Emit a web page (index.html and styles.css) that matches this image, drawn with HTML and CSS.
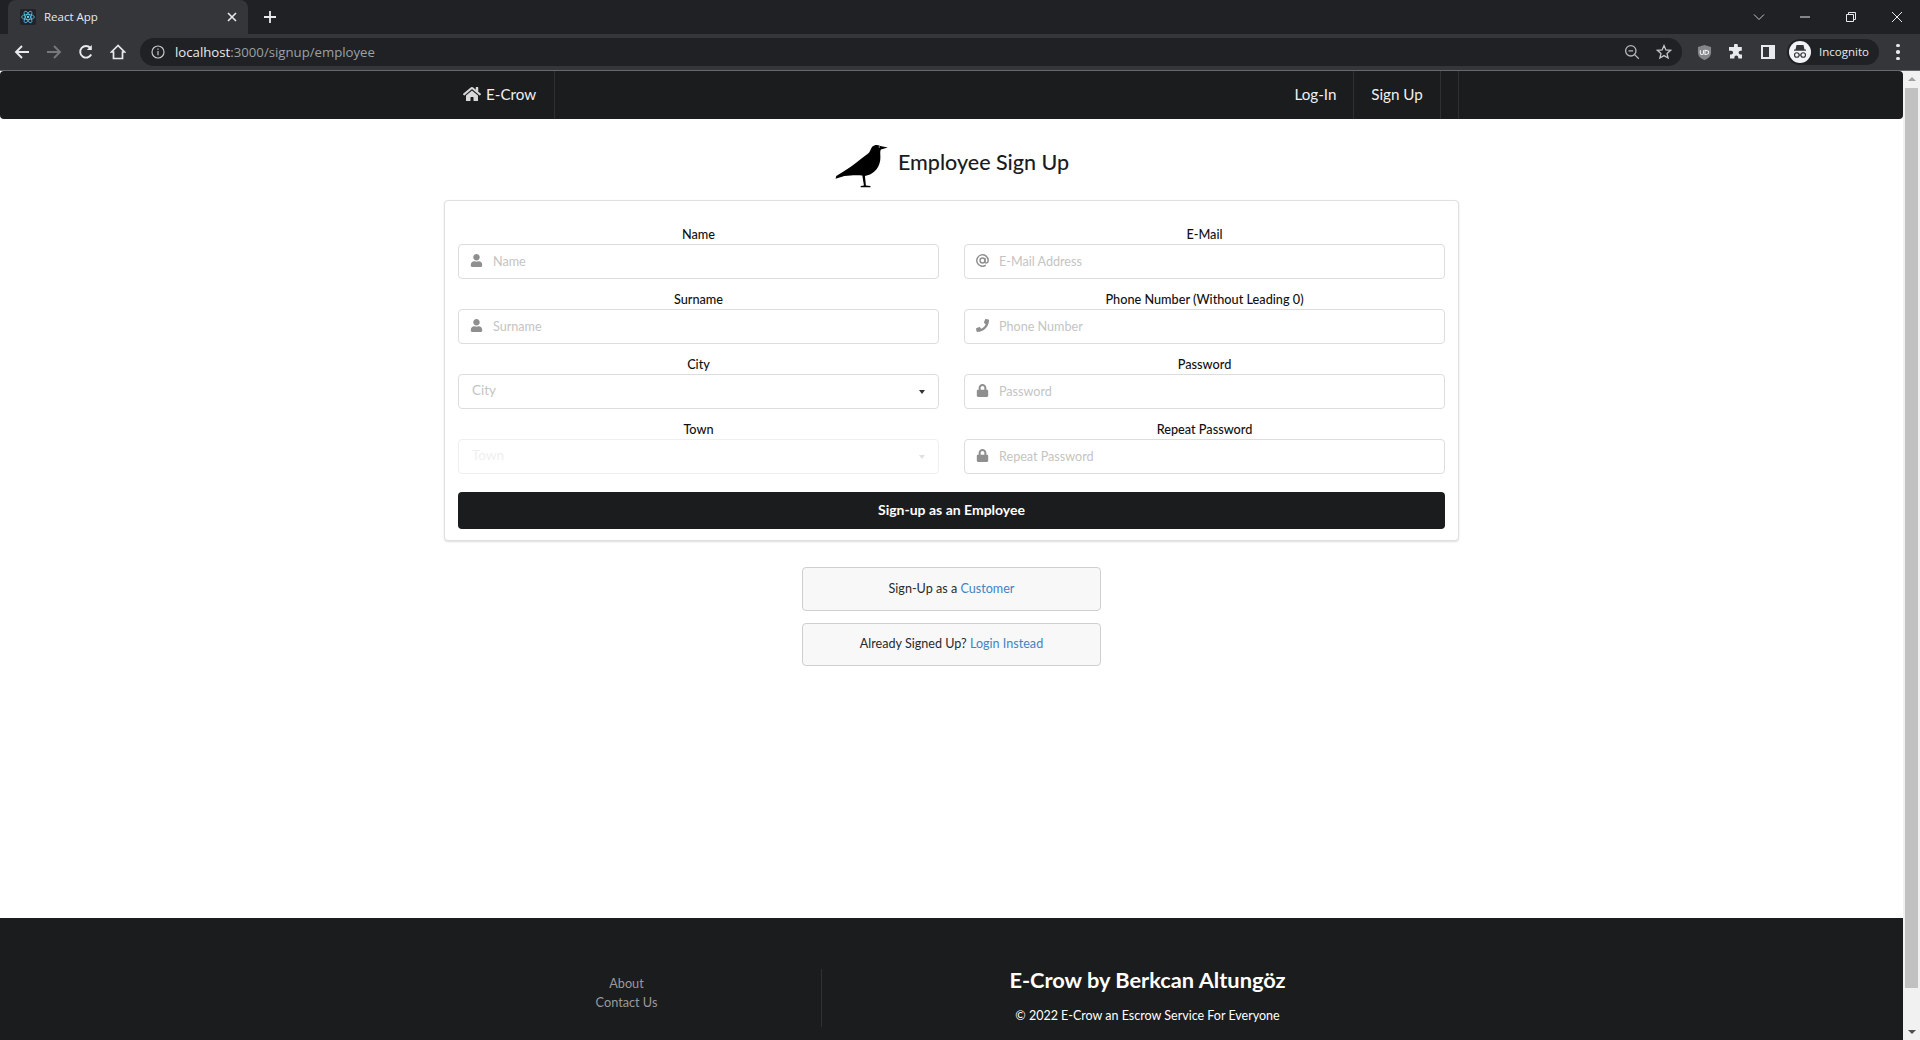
FILE: index.html
```html
<!DOCTYPE html>
<html lang="en">

<head>
    <meta charset="UTF-8">
    <title>React App</title>
    <link rel="stylesheet" href="styles.css">
</head>

<body>
    <!-- browser window chrome -->
    <div class="tab-strip">
        <div class="tab">
            <span class="favicon">
                <svg viewBox="0 0 24 24" width="14" height="14" fill="none" stroke="#61dafb" stroke-width="1.2">
                    <circle cx="12" cy="12" r="2" fill="#61dafb" stroke="none"/>
                    <ellipse cx="12" cy="12" rx="11" ry="4.3"/>
                    <ellipse cx="12" cy="12" rx="11" ry="4.3" transform="rotate(60 12 12)"/>
                    <ellipse cx="12" cy="12" rx="11" ry="4.3" transform="rotate(120 12 12)"/>
                </svg>
            </span>
            <span class="tab-title">React App</span>
            <svg class="tab-close" viewBox="0 0 10 10" width="10" height="10" stroke="#e8eaed" stroke-width="1.6">
                <path d="M1 1l8 8M9 1l-8 8"/>
            </svg>
        </div>
        <svg class="new-tab" viewBox="0 0 14 14" width="14" height="14" stroke="#e8eaed" stroke-width="1.8">
            <path d="M7 1v12M1 7h12"/>
        </svg>
        <div class="window-btns">
            <span class="window-btn">
                <svg viewBox="0 0 12 12" width="12" height="12" fill="none" stroke="#c4c7c5" stroke-width="1"><path d="M1 3.5l5 5 5-5"/></svg>
            </span>
            <span class="window-btn">
                <svg viewBox="0 0 12 12" width="12" height="12" stroke="#e8eaed" stroke-width="1"><path d="M1 6h10"/></svg>
            </span>
            <span class="window-btn">
                <svg viewBox="0 0 12 12" width="12" height="12" fill="none" stroke="#e8eaed" stroke-width="1"><path d="M1.5 3.5h7v7h-7zM3.5 3.5v-2h7v7h-2"/></svg>
            </span>
            <span class="window-btn">
                <svg viewBox="0 0 12 12" width="12" height="12" stroke="#e8eaed" stroke-width="1"><path d="M1 1l10 10M11 1L1 11"/></svg>
            </span>
        </div>
    </div>

    <div class="toolbar">
        <span class="tool-btn">
            <svg viewBox="0 0 16 16" width="16" height="16" fill="none" stroke="#e8eaed" stroke-width="1.9"><path d="M15 8H2M8 2L2 8l6 6"/></svg>
        </span>
        <span class="tool-btn">
            <svg viewBox="0 0 16 16" width="16" height="16" fill="none" stroke="#76787b" stroke-width="1.9"><path d="M1 8h13M8 2l6 6-6 6"/></svg>
        </span>
        <span class="tool-btn">
            <svg viewBox="0 0 16 16" width="16" height="16" fill="none" stroke="#e8eaed" stroke-width="1.9"><path d="M13.2 10.5A5.8 5.8 0 1 1 12.4 4"/><path d="M13.8 1v5h-5" fill="#e8eaed" stroke="none"/></svg>
        </span>
        <span class="tool-btn">
            <svg viewBox="0 0 16 16" width="16" height="16" fill="none" stroke="#e8eaed" stroke-width="1.7"><path d="M8 1.5L1.5 8h2v6.5h9V8h2z"/></svg>
        </span>

        <div class="omnibox">
            <svg class="info-icon" viewBox="0 0 14 14" width="14" height="14" fill="none" stroke="#c4c7c5" stroke-width="1.2">
                <circle cx="7" cy="7" r="6"/><path d="M7 6v4.2M7 3.4v1.4"/>
            </svg>
            <span class="url"><span class="url-host">localhost</span>:3000/signup/employee</span>
            <svg class="omni-icon" viewBox="0 0 16 16" width="16" height="16" fill="none" stroke="#b6b8ba" stroke-width="1.3">
                <circle cx="6.8" cy="6.8" r="5.2"/><path d="M10.6 10.6l4.2 4.2M4.5 6.8h4.6"/>
            </svg>
            <svg class="omni-icon" viewBox="0 0 16 16" width="16" height="16" fill="none" stroke="#c4c7c5" stroke-width="1.3">
                <path d="M8 1.6l1.9 4.3 4.7.4-3.6 3.1 1.1 4.6L8 11.6 3.9 14 5 9.4 1.4 6.3l4.7-.4z"/>
            </svg>
        </div>

        <span class="tool-btn">
            <svg viewBox="0 0 16 18" width="15" height="17">
                <path d="M8 1l7 2v6c0 4-3 6.7-7 8-4-1.300-7-4-7-8V3z" fill="#85868a"/>
                <path d="M3.500 6.500v3a1.700 1.700 0 0 0 3.400 0v-3M8.500 6.500v4.700c2.700 0 4-1 4-2.400 0-1.500-1.300-2.300-4-2.300z" fill="none" stroke="#f1f3f4" stroke-width="1.100"/>
            </svg>
        </span>
        <span class="tool-btn">
            <svg viewBox="0 0 16 16" width="16" height="16" fill="#e8eaed">
                <path d="M6 1.500a1.900 1.900 0 0 1 3.800 0V3h4v3.700h-1.300a1.900 1.900 0 0 0 0 3.800H14V14.500H10.200v-1.200a1.900 1.900 0 0 0-3.800 0v1.200H2V10.500h1.200a1.900 1.900 0 0 0 0-3.800H1V3h5z"/>
            </svg>
        </span>
        <span class="tool-btn">
            <svg viewBox="0 0 14 14" width="14" height="14"><path d="M0 0h14v14H0z" fill="#e8eaed"/><path d="M2 2h6v10H2z" fill="#35363a"/></svg>
        </span>
        <div class="profile">
            <span class="avatar">
                <svg viewBox="0 0 22 22" width="22" height="22">
                    <circle cx="11" cy="11" r="11" fill="#f1f3f4"/>
                    <path d="M7.500 4h7l1 4.500H17v1.200H5V8.500h1.500z" fill="#35363a"/>
                    <circle cx="7.800" cy="14" r="2.300" fill="none" stroke="#35363a" stroke-width="1.100"/>
                    <circle cx="14.200" cy="14" r="2.300" fill="none" stroke="#35363a" stroke-width="1.100"/>
                    <path d="M10 14h2" stroke="#35363a" stroke-width="1.100"/>
                </svg>
            </span>
            <span class="profile-name">Incognito</span>
        </div>
        <span class="tool-btn menu-btn">
            <span class="dot"></span><span class="dot"></span><span class="dot"></span>
        </span>
    </div>

    <!-- the app itself -->
    <div class="viewport">
        <div class="page">
            <nav class="navbar">
                <div class="container nav-inner">
                    <a class="nav-item brand">
                        <svg class="icon home-icon" viewBox="0 0 576 512"><path d="M280.37 148.26L96 300.11V464a16 16 0 0 0 16 16l112.06-.29a16 16 0 0 0 15.92-16V368a16 16 0 0 1 16-16h64a16 16 0 0 1 16 16v95.64a16 16 0 0 0 16 16.05L464 480a16 16 0 0 0 16-16V300L295.67 148.26a12.19 12.19 0 0 0-15.3 0zM571.6 251.47L488 182.56V44.05a12 12 0 0 0-12-12h-56a12 12 0 0 0-12 12v72.61L318.47 43a48 48 0 0 0-61 0L4.34 251.47a12 12 0 0 0-1.6 16.9l25.5 31A12 12 0 0 0 45.15 301l235.22-193.74a12.19 12.19 0 0 1 15.3 0L530.9 301a12 12 0 0 0 16.9-1.6l25.5-31a12 12 0 0 0-1.7-16.93z"/></svg>
                        E-Crow
                    </a>
                    <div class="nav-right">
                        <a class="nav-item login">Log-In</a>
                        <a class="nav-item signup">Sign Up</a>
                        <span class="nav-end"></span>
                    </div>
                </div>
            </nav>

            <main class="main">
                <div class="title-row">
                    <svg class="crow" viewBox="160 55 165 135">
                        <path d="M323 66L300 61C292 56 282 57 276 63C270 70 270 80 262 85C240 100 215 125 165 153L163 162L190 153C215 150 232 150 245 152L250 182L240 184V188H270V184L256 182L253 153C275 150 295 135 300 105C302 90 298 80 302 72Z"/>
                        <circle cx="297" cy="64" r="1.800" fill="#fff"/>
                    </svg>
                    <h2 class="title">Employee Sign Up</h2>
                </div>

                <form class="card">
                    <div class="fields">
                        <div class="field">
                            <label>Name</label>
                            <div class="input-wrap">
                                <svg class="icon field-icon" viewBox="0 0 448 512"><path d="M224 256c70.700 0 128-57.300 128-128S294.700 0 224 0 96 57.300 96 128s57.300 128 128 128zm89.600 32h-16.700c-22.200 10.200-46.900 16-72.900 16s-50.600-5.800-72.900-16h-16.700C60.200 288 0 348.200 0 422.400V464c0 26.500 21.500 48 48 48h352c26.500 0 48-21.500 48-48v-41.600c0-74.200-60.200-134.400-134.400-134.400z"/></svg>
                                <input type="text" placeholder="Name">
                            </div>
                        </div>
                        <div class="field">
                            <label>E-Mail</label>
                            <div class="input-wrap">
                                <svg class="field-icon at-icon" viewBox="0 0 16 16"><circle cx="8" cy="8" r="3"/><path d="M11 5v4.200c0 2.800 4 2.300 4-1.200a7 7 0 1 0-3 5.700"/></svg>
                                <input type="text" placeholder="E-Mail Address">
                            </div>
                        </div>
                        <div class="field">
                            <label>Surname</label>
                            <div class="input-wrap">
                                <svg class="icon field-icon" viewBox="0 0 448 512"><path d="M224 256c70.700 0 128-57.300 128-128S294.700 0 224 0 96 57.300 96 128s57.300 128 128 128zm89.600 32h-16.700c-22.200 10.200-46.900 16-72.900 16s-50.600-5.800-72.900-16h-16.700C60.200 288 0 348.200 0 422.400V464c0 26.500 21.500 48 48 48h352c26.500 0 48-21.500 48-48v-41.600c0-74.200-60.200-134.400-134.400-134.400z"/></svg>
                                <input type="text" placeholder="Surname">
                            </div>
                        </div>
                        <div class="field">
                            <label>Phone Number (Without Leading 0)</label>
                            <div class="input-wrap">
                                <svg class="icon field-icon" viewBox="0 0 512 512"><path d="M493.400 24.600l-104-24c-11.300-2.600-22.900 3.300-27.500 13.900l-48 112c-4.200 9.800-1.400 21.300 6.900 28l60.600 49.600c-36 76.700-98.900 140.500-177.200 177.200l-49.600-60.600c-6.800-8.300-18.200-11.100-28-6.900l-112 48C3.900 366.500-2 378.100.6 389.400l24 104C27.100 504.200 36.700 512 48 512c256.100 0 464-207.500 464-464 0-11.200-7.700-20.900-18.600-23.400z"/></svg>
                                <input type="text" placeholder="Phone Number">
                            </div>
                        </div>
                        <div class="field">
                            <label>City</label>
                            <div class="select">
                                <span class="select-text">City</span>
                                <span class="caret"></span>
                            </div>
                        </div>
                        <div class="field">
                            <label>Password</label>
                            <div class="input-wrap">
                                <svg class="icon field-icon" viewBox="0 0 448 512"><path d="M400 224h-24v-72C376 68.200 307.800 0 224 0S72 68.200 72 152v72H48c-26.500 0-48 21.500-48 48v192c0 26.500 21.500 48 48 48h352c26.500 0 48-21.500 48-48V272c0-26.500-21.500-48-48-48zm-104 0H152v-72c0-39.700 32.300-72 72-72s72 32.300 72 72v72z"/></svg>
                                <input type="password" placeholder="Password">
                            </div>
                        </div>
                        <div class="field">
                            <label>Town</label>
                            <div class="select disabled">
                                <span class="select-text">Town</span>
                                <span class="caret"></span>
                            </div>
                        </div>
                        <div class="field">
                            <label>Repeat Password</label>
                            <div class="input-wrap">
                                <svg class="icon field-icon" viewBox="0 0 448 512"><path d="M400 224h-24v-72C376 68.200 307.800 0 224 0S72 68.200 72 152v72H48c-26.500 0-48 21.500-48 48v192c0 26.500 21.500 48 48 48h352c26.500 0 48-21.500 48-48V272c0-26.500-21.500-48-48-48zm-104 0H152v-72c0-39.700 32.300-72 72-72s72 32.300 72 72v72z"/></svg>
                                <input type="password" placeholder="Repeat Password">
                            </div>
                        </div>
                    </div>
                    <button type="button" class="submit-btn">Sign-up as an Employee</button>
                </form>

                <div class="message first">Sign-Up as a&nbsp;<a>Customer</a></div>
                <div class="message">Already Signed Up?&nbsp;<a>Login Instead</a></div>
            </main>

            <footer class="footer">
                <div class="container footer-inner">
                    <div class="footer-links">
                        <a>About</a>
                        <a>Contact Us</a>
                    </div>
                    <div class="footer-info">
                        <h3>E-Crow by Berkcan Altungöz</h3>
                        <p>© 2022 E-Crow an Escrow Service For Everyone</p>
                    </div>
                </div>
            </footer>
        </div>

        <div class="scrollbar">
            <span class="arrow-up"></span>
            <div class="track"><div class="thumb"></div></div>
            <span class="arrow-down"></span>
        </div>
    </div>
</body>

</html>
```

FILE: styles.css
```css
/* Window chrome */
html, body {
    height: 100%;
}

body {
    margin: 0;
    display: flex;
    flex-direction: column;
    overflow: hidden;
    font-family: 'Lato', 'Liberation Sans', sans-serif;
    font-size: 12.6px;
    color: #212121;
    background-color: #fff;
}

.tab-strip {
    display: flex;
    align-items: center;
    height: 34px;
    flex-shrink: 0;
    background-color: #202124;
}

.tab {
    display: flex;
    align-items: center;
    align-self: stretch;
    width: 240px;
    margin-left: 8px;
    padding: 0 11px 0 12px;
    box-sizing: border-box;
    background-color: #35363a;
    border-radius: 8px 8px 0 0;
}

.favicon {
    display: flex;
    align-items: center;
    justify-content: center;
    width: 16px;
    height: 16px;
    background-color: #20232a;
    border-radius: 2px;
}

.tab-title {
    flex: 1;
    margin-left: 8px;
    padding-bottom: 2px;
    font-family: 'Open Sans', sans-serif;
    font-size: 11.5px;
    color: #e8eaed;
}

.new-tab {
    margin-left: 15px;
}

.window-btns {
    display: flex;
    margin-left: auto;
}

.window-btn {
    display: flex;
    align-items: center;
    justify-content: center;
    width: 46px;
    height: 34px;
}

.toolbar {
    display: flex;
    align-items: center;
    height: 36px;
    flex-shrink: 0;
    padding-left: 6px;
    background-color: #35363a;
    border-bottom: 1px solid #66686b;
}

.tool-btn {
    display: flex;
    align-items: center;
    justify-content: center;
    width: 32px;
    height: 28px;
}

.omnibox {
    display: flex;
    align-items: center;
    width: 1542px;
    height: 28px;
    margin: 0 6px;
    padding: 0 10px 0 11px;
    box-sizing: border-box;
    background-color: #202124;
    border-radius: 14px;
}

.url {
    flex: 1;
    margin-left: 10px;
    font-family: 'Open Sans', sans-serif;
    font-size: 13.2px;
    color: #9aa0a6;
}

.url-host {
    color: #e8eaed;
}

.omni-icon {
    margin-left: 16px;
}

.profile {
    display: flex;
    align-items: center;
    width: 92px;
    height: 26px;
    margin-left: 3px;
    padding-left: 2px;
    box-sizing: border-box;
    background-color: #202124;
    border-radius: 13px;
}

.avatar {
    display: flex;
    width: 22px;
    height: 22px;
}

.profile-name {
    margin-left: 8px;
    padding-bottom: 2px;
    font-family: 'Open Sans', sans-serif;
    font-size: 11.5px;
    color: #e8eaed;
}

.menu-btn {
    flex-direction: column;
    gap: 3px;
    margin-left: 3px;
}

.dot {
    width: 3.5px;
    height: 3.5px;
    background-color: #e8eaed;
    border-radius: 50%;
}

/* Page area */
.viewport {
    flex: 1;
    display: flex;
    min-height: 0;
}

.page {
    flex: 1;
    min-width: 0;
    overflow: hidden;
}

.container {
    width: 1015px;
    margin: 0 auto;
}

.icon {
    fill: currentColor;
}

.navbar {
    height: 48px;
    background-color: #1b1c1d;
    border-radius: 4px;
}

.nav-inner {
    display: flex;
    justify-content: space-between;
    height: 100%;
}

.nav-right {
    display: flex;
}

.nav-item {
    display: flex;
    align-items: center;
    box-sizing: border-box;
    padding-bottom: 2px;
    font-size: 15.2px;
    white-space: nowrap;
    color: #f0f0f0;
    border-right: 1px solid #2f3031;
}

.home-icon {
    width: 18px;
    height: 16px;
    margin-right: 5px;
    color: #d8d8d8;
}

.brand {
    width: 111px;
    padding-left: 19px;
}

.login {
    justify-content: center;
    width: 76px;
}

.signup {
    justify-content: center;
    width: 87px;
}

.nav-end {
    width: 17px;
    border-right: 1px solid #2f3031;
}

.main {
    display: flex;
    flex-direction: column;
    align-items: center;
    min-height: 799px;
}

.title-row {
    display: flex;
    align-items: center;
    gap: 9px;
    padding: 25px 0 12px;
}

.crow {
    width: 55px;
    height: 44px;
}

.title {
    margin: 0 0 8px;
    font-size: 21.5px;
    font-weight: 500;
    color: #1b1c1d;
}

.card {
    width: 1015px;
    padding: 24px 13px 11px;
    box-sizing: border-box;
    background-color: #fff;
    border: 1px solid #dfe0e1;
    border-radius: 4px;
    box-shadow: 0 1px 2px rgba(34, 36, 38, .15);
}

.fields {
    display: grid;
    grid-template-columns: 481px 481px;
    column-gap: 25px;
    row-gap: 11px;
}

.field label {
    display: block;
    height: 18px;
    margin-bottom: 1px;
    font-size: 12.7px;
    font-weight: 500;
    line-height: 18px;
    text-align: center;
    color: #111;
}

.input-wrap {
    position: relative;
}

.input-wrap input {
    display: block;
    width: 100%;
    height: 35px;
    padding: 0 12px 0 34px;
    box-sizing: border-box;
    font-family: inherit;
    font-size: 12.6px;
    background-color: #fff;
    border: 1px solid #dcddde;
    border-radius: 4px;
    outline: none;
}

.input-wrap input::placeholder {
    color: #c4c4c4;
    opacity: 1;
}

.field-icon {
    position: absolute;
    left: 12px;
    top: 10px;
    width: 13px;
    height: 13px;
    color: #8f8f8f;
}

.at-icon {
    fill: none;
    stroke: #8f8f8f;
    stroke-width: 1.8;
}

.select {
    display: flex;
    align-items: center;
    justify-content: space-between;
    height: 35px;
    padding: 0 13px;
    box-sizing: border-box;
    background-color: #fff;
    border: 1px solid #dcddde;
    border-radius: 4px;
}

.select-text {
    padding-bottom: 3px;
    font-size: 13.5px;
    color: #c4c4c4;
}

.caret {
    width: 0;
    height: 0;
    border-left: 3.5px solid transparent;
    border-right: 3.5px solid transparent;
    border-top: 4px solid #333;
}

.select.disabled {
    opacity: .45;
}

.select.disabled .select-text {
    color: #dcdcdc;
}

.select.disabled .caret {
    border-top-color: #bbb;
}

.submit-btn {
    display: block;
    width: 100%;
    height: 37px;
    margin-top: 18px;
    padding: 0 0 2px;
    font-family: inherit;
    font-size: 14px;
    font-weight: 700;
    color: #fff;
    background-color: #1b1c1d;
    border: none;
    border-radius: 4px;
}

.message {
    display: flex;
    align-items: center;
    justify-content: center;
    width: 299px;
    height: 43px;
    margin-top: 12px;
    padding-bottom: 2px;
    box-sizing: border-box;
    font-size: 12.6px;
    color: #2a2a2a;
    background-color: #f8f8f9;
    border: 1px solid #cfcfd0;
    border-radius: 4px;
}

.message.first {
    height: 44px;
    margin-top: 26px;
}

.message a {
    color: #4183c4;
}

.footer {
    height: 160px;
    padding-top: 51px;
    box-sizing: border-box;
    background-color: #1b1c1d;
}

.footer-inner {
    display: grid;
    grid-template-columns: 378px 1fr;
    height: 58px;
}

.footer-links {
    display: flex;
    flex-direction: column;
    align-items: center;
    gap: 1px;
    padding: 5px 12px 0 0;
    font-size: 12.7px;
    line-height: 18px;
    color: #9a9a9a;
    border-right: 1px solid #303132;
}

.footer-info {
    padding-left: 14px;
    text-align: center;
    color: #fff;
}

.footer-info h3 {
    margin: -2px 0 0;
    font-size: 21.8px;
    font-weight: 700;
    line-height: 26px;
}

.footer-info p {
    margin: 14px 0 0;
    font-size: 12.5px;
    line-height: 18px;
}

/* Scrollbar */
.scrollbar {
    display: flex;
    flex-direction: column;
    align-items: center;
    justify-content: space-between;
    width: 17px;
    flex-shrink: 0;
    background-color: #f1f1f1;
}

.track {
    flex: 1;
    width: 100%;
    padding: 0 2px;
    box-sizing: border-box;
}

.thumb {
    height: 900px;
    background-color: #c1c1c1;
}

.arrow-up,
.arrow-down {
    width: 0;
    height: 0;
    border-left: 4px solid transparent;
    border-right: 4px solid transparent;
}

.arrow-up {
    margin: 6px 0 7px;
    border-bottom: 4px solid #a0a0a0;
}

.arrow-down {
    margin: 7px 0 6px;
    border-top: 4px solid #505050;
}
```
